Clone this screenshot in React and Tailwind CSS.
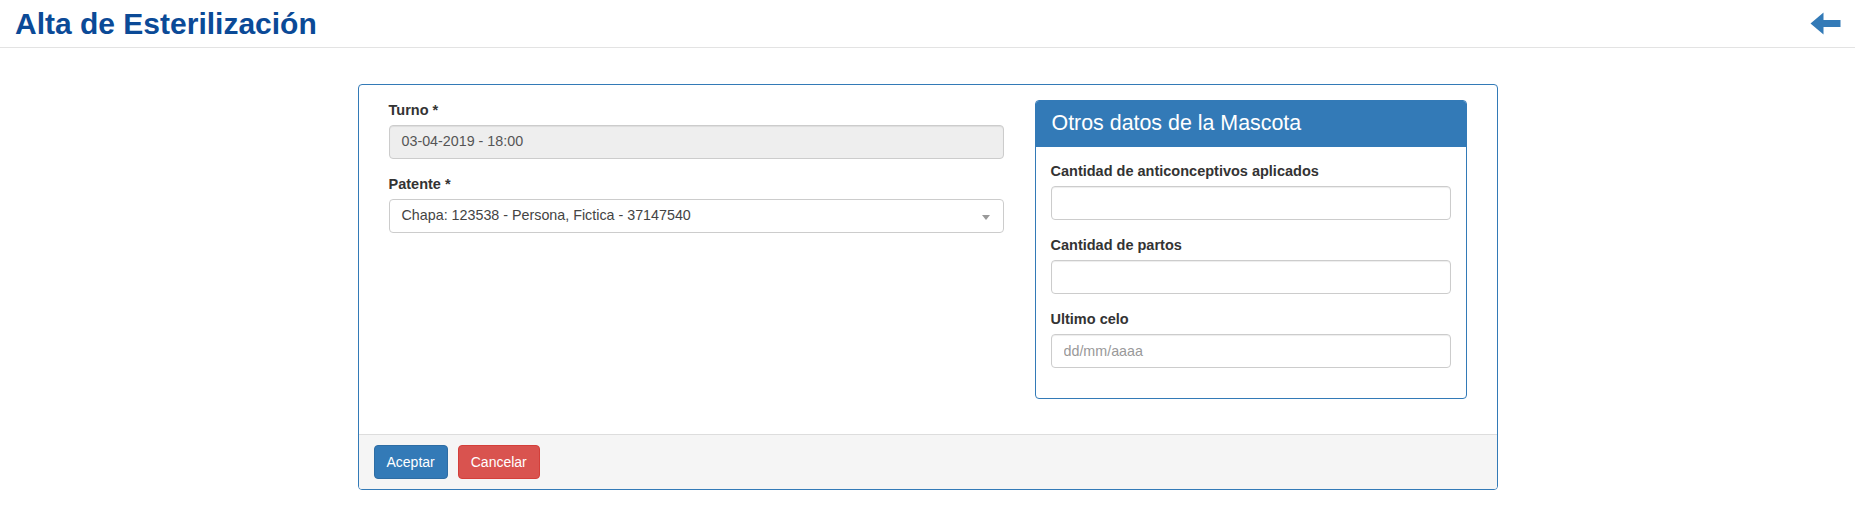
const labelCls = 'mb-[5px] block text-[14.5px] font-bold leading-5 text-[#333]';
const boxCls =
  'block h-[34px] w-full rounded-[4px] border border-[#ccc] px-3 text-[14.3px] text-[#555] shadow-[inset_0_1px_1px_rgba(0,0,0,0.075)] outline-none placeholder:text-[#999]';

function BackArrow() {
  return (
    <svg width="31" height="23" viewBox="0 0 31 23" className="block">
      <path d="M0.5 11.5 L13.5 0.5 L13.5 8 L30.5 8 L30.5 15 L13.5 15 L13.5 22.5 Z" fill="#337ab7" />
    </svg>
  );
}

function Field({ label, children }) {
  return (
    <div className="mb-[15px]">
      <label className={labelCls}>{label}</label>
      {children}
    </div>
  );
}

export default function App() {
  return (
    <div className="min-h-screen bg-white font-['Liberation_Sans',Arial,sans-serif] text-[14px] text-[#333]">
      <header className="flex h-[48px] items-center justify-between border-b border-[#e3e3e3] pl-[15px] pr-[14px]">
        <h1 className="text-[30px] font-bold leading-[1.1] text-[#0b4a97]">Alta de Esterilización</h1>
        <BackArrow />
      </header>

      <div className="mx-auto mt-[36px] w-[1140px] overflow-hidden rounded-[4px] border border-[#337ab7]">
        <div className="flex px-[30px] py-[15px]">
          <div className="w-[615px]">
            <Field label="Turno *">
              <div className={`${boxCls} flex items-center bg-[#eee]`}>03-04-2019 - 18:00</div>
            </Field>
            <Field label="Patente *">
              <div className="relative flex h-[34px] w-full items-center rounded-[4px] border border-[#ccc] bg-white px-3 text-[14.3px] text-[#444]">
                Chapa: 123538 - Persona, Fictica - 37147540
                <span className="absolute right-[13px] top-[15px] h-0 w-0 border-x-[4px] border-t-[5px] border-x-transparent border-t-[#999]" />
              </div>
            </Field>
          </div>

          <div className="mb-[20px] ml-auto w-[432px] overflow-hidden rounded-[4px] border border-[#337ab7]">
            <div className="flex h-[46px] items-center border-b border-[#337ab7] bg-[#337ab7] px-[16px] text-[21.4px] leading-[1.1] text-white">
              Otros datos de la Mascota
            </div>
            <div className="px-[15px] pt-[14px] pb-[15px]">
              <Field label="Cantidad de anticonceptivos aplicados">
                <input className={`${boxCls} bg-white`} type="text" />
              </Field>
              <Field label="Cantidad de partos">
                <input className={`${boxCls} bg-white`} type="text" />
              </Field>
              <Field label="Ultimo celo">
                <input className={`${boxCls} bg-white`} type="text" placeholder="dd/mm/aaaa" />
              </Field>
            </div>
          </div>
        </div>

        <div className="flex gap-[10px] border-t border-[#ddd] bg-[#f5f5f5] px-[15px] py-[10px]">
          <button
            type="button"
            className="h-[34px] rounded-[4px] border border-[#2e6da4] bg-[#337ab7] px-3 text-[14px] text-white"
          >
            Aceptar
          </button>
          <button
            type="button"
            className="h-[34px] rounded-[4px] border border-[#d43f3a] bg-[#d9534f] px-3 text-[14px] text-white"
          >
            Cancelar
          </button>
        </div>
      </div>
    </div>
  );
}
